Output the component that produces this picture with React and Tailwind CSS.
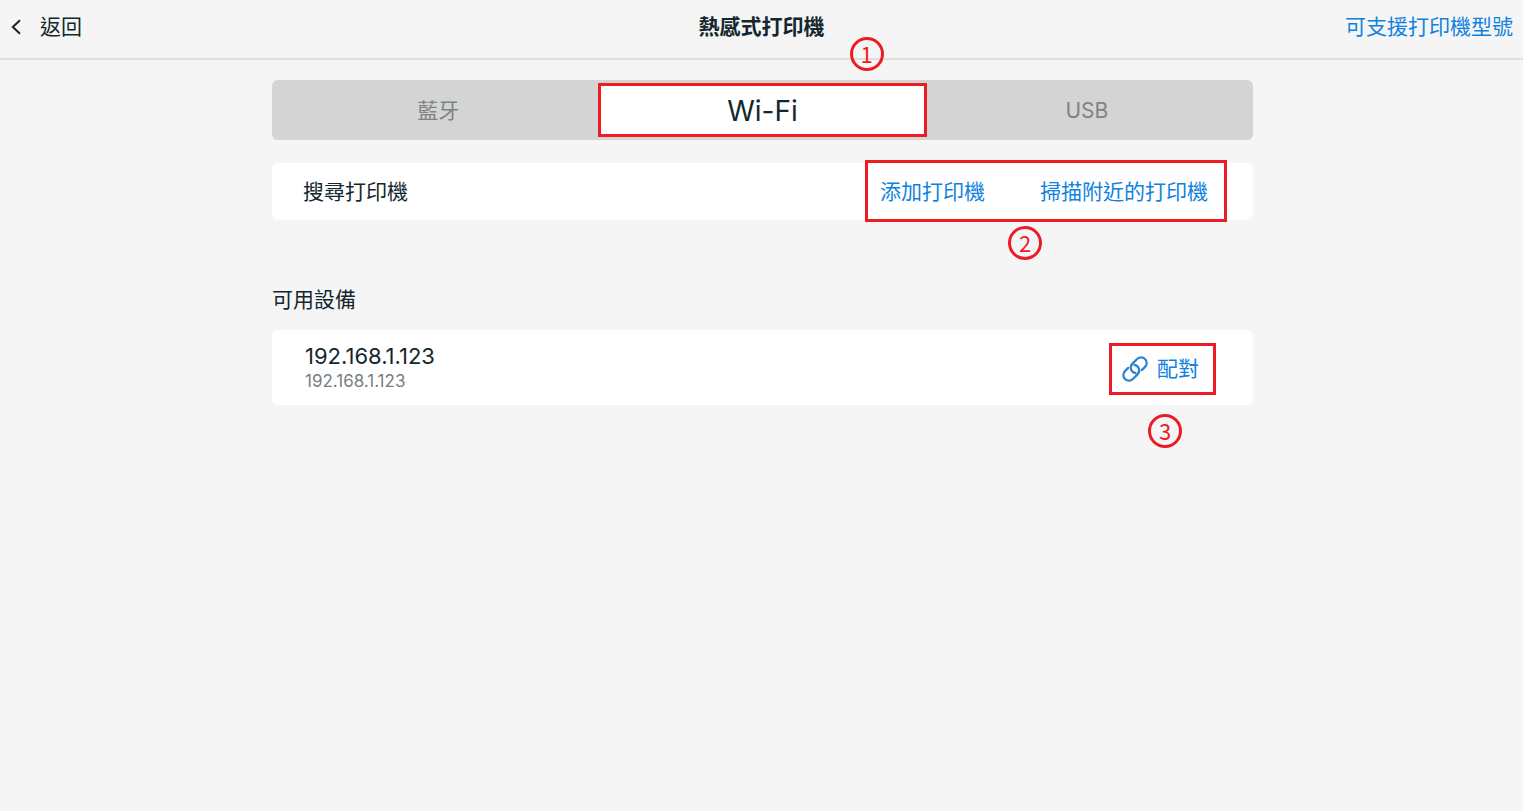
import React, { useState } from "react";

const TABS = [
    { value: "bluetooth", label: "藍牙" },
    { value: "wifi", label: "Wi-Fi" },
    { value: "usb", label: "USB" },
];

const DEVICES = [
    { name: "192.168.1.123", address: "192.168.1.123" },
];

function BackIcon() {
    return (
        <svg className="w-3 h-4" viewBox="0 0 12 16" fill="none" stroke="currentColor" strokeWidth="2" aria-hidden="true">
            <path d="M10 1.2 2.8 8l7.2 6.8" />
        </svg>
    );
}

// two chain links, each one broken where the other passes over it
function LinkIcon() {
    return (
        <svg className="w-7 h-7" viewBox="-14 -14 28 28" fill="none" stroke="#2d80d2" strokeWidth="2.2" strokeLinecap="round" aria-hidden="true">
            <g transform="rotate(-45)">
                <path d="M4 5.6H8.6A5.6 5.6 0 0 0 8.6-5.6H2A5.6 5.6 0 0 0-2.5 3.3" />
                <path d="M-4-5.6H-8.6A5.6 5.6 0 0 0-8.6 5.6H-2A5.6 5.6 0 0 0 2.5-3.3" />
            </g>
        </svg>
    );
}

// red frame with a step number, drawn over the control it points to
function Callout({ step, className, badgeClassName }) {
    return (
        <span className={`absolute border-3 border-[#ed1c24] pointer-events-none ${className}`}>
            <span className={`absolute flex items-center justify-center w-[34px] h-[34px] pb-0.5 rounded-full border-3 border-[#ed1c24] text-[#ed1c24] text-[22px] leading-none font-['Noto_Sans_CJK_TC',sans-serif] ${badgeClassName}`}>
                {step}
            </span>
        </span>
    );
}

function App() {
    const [tab, setTab] = useState("wifi");

    return (
        <div className="min-h-screen bg-[#f5f5f5] text-[#14272e] text-[21px] leading-8 font-['Inter','Noto_Sans_CJK_TC',sans-serif]">
            <header className="grid grid-cols-3 items-center h-[60px] px-[10px] pb-1 border-b-2 border-[#dedede]">
                <button className="flex items-center gap-[18px] justify-self-start">
                    <BackIcon />
                    返回
                </button>
                <h1 className="text-center font-bold">熱感式打印機</h1>
                <a href="#models" className="justify-self-end text-[#0f82e0]">可支援打印機型號</a>
            </header>

            <main className="w-full max-w-[983px] mx-auto pl-0.5 pt-5">
                <div role="tablist" className="grid grid-cols-3 h-[60px] px-1 py-[3px] rounded-md bg-[#d4d4d4]">
                    {TABS.map((item) => (
                        <button
                            key={item.value}
                            role="tab"
                            aria-selected={tab === item.value}
                            onClick={() => setTab(item.value)}
                            className={`relative pt-0.5 ${tab === item.value ? "bg-white text-[28px]" : "text-[#7b8488]"}`}
                        >
                            {item.label}
                            {item.value === "wifi" && (
                                <Callout step={1} className="inset-y-0 -inset-x-0.5" badgeClassName="right-10 -top-[49px]" />
                            )}
                        </button>
                    ))}
                </div>

                <section className="flex items-center justify-between h-[57px] mt-[23px] pl-[31px] pr-[45px] rounded-md bg-white">
                    <h2>搜尋打印機</h2>
                    <div className="relative flex gap-[55px] text-[#0f82e0]">
                        <button>添加打印機</button>
                        <button>掃描附近的打印機</button>
                        <Callout step={2} className="-left-[15px] -right-[19px] -top-4 -bottom-[14px]" badgeClassName="left-[140px] top-[63px]" />
                    </div>
                </section>

                <h2 className="mt-16">可用設備</h2>
                <ul className="mt-[14px]">
                    {DEVICES.map((device) => (
                        <li key={device.address} className="flex items-center justify-between h-[75px] pt-0.5 pl-[33px] pr-[54px] rounded-md bg-white">
                            <div className="pb-1">
                                <p className="text-[22px] leading-7">{device.name}</p>
                                <p className="text-[17px] leading-[22px] text-[#76807f]">{device.address}</p>
                            </div>
                            <button className="relative flex items-center gap-2 text-[#0f82e0]">
                                <LinkIcon />
                                配對
                                <Callout step={3} className="-left-3 -right-[17px] -inset-y-[10px]" badgeClassName="left-9 top-[68px]" />
                            </button>
                        </li>
                    ))}
                </ul>
            </main>
        </div>
    );
}

export default App;
